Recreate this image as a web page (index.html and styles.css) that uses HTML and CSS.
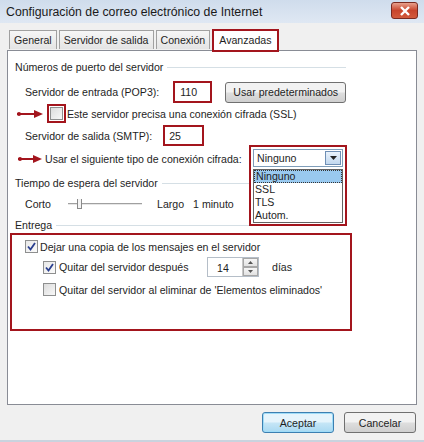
FILE: index.html
```html
<!DOCTYPE html>
<html lang="es">
<head>
  <meta charset="UTF-8">
  <title>Configuración de correo electrónico de Internet</title>
  <link rel="stylesheet" href="styles.css">
</head>
<body>
  <div class="window">
    <div class="titlebar">
      <span class="title">Configuración de correo electrónico de Internet</span>
      <div class="close">
        <svg width="12" height="10" viewBox="0 0 12 10"><path d="M2 1 L10 9 M10 1 L2 9" stroke="#fff" stroke-width="2.4"/></svg>
      </div>
    </div>

    <div class="tabs">
      <div class="tab">General</div>
      <div class="tab">Servidor de salida</div>
      <div class="tab">Conexión</div>
      <div class="tab active">Avanzadas</div>
    </div>

    <div class="panel">
      <div class="legend"><span>Números de puerto del servidor</span><i></i></div>

      <div class="row row-pop">
        <span class="lbl">Servidor de entrada (POP3):</span>
        <span class="mark mark-pop"><span class="field">110</span></span>
        <button class="btn btn-def">Usar predeterminados</button>
      </div>

      <div class="row row-ssl">
        <span class="arrow"></span>
        <span class="mark mark-chk"><span class="chk"></span></span>
        <span>Este servidor precisa una conexión cifrada (SSL)</span>
      </div>

      <div class="row row-smtp">
        <span class="lbl">Servidor de salida (SMTP):</span>
        <span class="mark mark-smtp"><span class="field">25</span></span>
      </div>

      <div class="row row-enc">
        <span class="arrow arrow-enc"></span>
        <span>Usar el siguiente tipo de conexión cifrada:</span>
        <div class="mark combo-wrap">
          <div class="combo">
            <span>Ninguno</span>
            <span class="combo-btn">
              <svg width="7" height="4" viewBox="0 0 7 4"><path d="M0 0 H7 L3.5 4 Z" fill="#222"/></svg>
            </span>
          </div>
          <div class="combo-list">
            <div class="opt sel">Ninguno</div>
            <div class="opt">SSL</div>
            <div class="opt">TLS</div>
            <div class="opt">Autom.</div>
          </div>
        </div>
      </div>

      <div class="legend legend-time"><span>Tiempo de espera del servidor</span><i></i></div>

      <div class="row row-slider">
        <span class="lbl-short">Corto</span>
        <span class="slider">
          <span class="track"></span>
          <span class="thumb"></span>
        </span>
        <span class="lbl-largo">Largo</span>
        <span>1 minuto</span>
      </div>

      <div class="legend legend-ent"><span>Entrega</span><i></i></div>

      <div class="mark entrega">
        <div class="row row-copy">
          <span class="chk on">
            <svg width="9" height="9" viewBox="0 0 9 9"><path d="M1 4.5 L3.5 7.5 L8 1" fill="none" stroke="#2a3f8f" stroke-width="1.8"/></svg>
          </span>
          <span>Dejar una copia de los mensajes en el servidor</span>
        </div>
        <div class="row row-sub">
          <span class="chk on">
            <svg width="9" height="9" viewBox="0 0 9 9"><path d="M1 4.5 L3.5 7.5 L8 1" fill="none" stroke="#2a3f8f" stroke-width="1.8"/></svg>
          </span>
          <span class="lbl-after">Quitar del servidor después</span>
          <span class="spin">
            <span class="spin-val">14</span>
            <span class="spin-btns">
              <span><svg width="5" height="3" viewBox="0 0 5 3"><path d="M0 3 H5 L2.5 0 Z" fill="#555"/></svg></span>
              <span><svg width="5" height="3" viewBox="0 0 5 3"><path d="M0 0 H5 L2.5 3 Z" fill="#555"/></svg></span>
            </span>
          </span>
          <span>días</span>
        </div>
        <div class="row row-sub">
          <span class="chk"></span>
          <span>Quitar del servidor al eliminar de 'Elementos eliminados'</span>
        </div>
      </div>
    </div>

    <div class="footer">
      <button class="btn btn-ok">Aceptar</button>
      <button class="btn btn-cancel">Cancelar</button>
    </div>
  </div>
</body>
</html>
```

FILE: styles.css
```css
* { box-sizing: border-box; margin: 0; padding: 0; }
body {
  font-family: 'Liberation Sans', Arial, sans-serif;
  font-size: 10.6px;
  color: #1e1e1e;
  background: #f0f0f0;
}
.window {
  width: 424px;
  height: 442px;
  background: #f0f0f0;
  border-bottom: 2px solid #c9d3de;
  display: flex;
  flex-direction: column;
}
.titlebar {
  height: 23px;
  background: linear-gradient(#cfdcec, #dfe8f3);
  display: flex;
  align-items: center;
  justify-content: space-between;
  padding: 0 6px 0 6px;
}
.title {
  font-size: 12.3px;
  color: #1a1a1a;
}
.close {
  width: 27px;
  height: 17px;
  margin-top: -2px;
  border: 1px solid #7a2a20;
  border-radius: 3px;
  background: linear-gradient(#e8a08c, #c8452c 50%, #d25a3c);
  display: flex;
  align-items: center;
  justify-content: center;
}
.tabs {
  display: flex;
  padding: 0 0 0 9px;
  height: 27px;
  align-items: flex-end;
  position: relative;
  z-index: 2;
}
.tab {
  height: 19px;
  padding: 0 4px;
  border: 1px solid #a0a0a0;
  border-bottom: none;
  background: linear-gradient(#f6f6f6, #e4e4e4);
  margin-right: 2px;
  display: flex;
  align-items: center;
  margin-bottom: 1px;
}
.tab.active {
  height: 23px;
  margin-bottom: -2px;
  background: #fff;
  border: 2px solid #a3151d;
  padding: 0 5px 2px;
}
.panel {
  margin: 0 7px;
  height: 355px;
  background: #fff;
  border: 1px solid #898c95;
  padding: 9px 0 0 7px;
  display: flex;
  flex-direction: column;
  position: relative;
}
.legend {
  width: 331px;
  height: 14px;
  display: flex;
  align-items: center;
  gap: 4px;
}
.legend i {
  flex: 1;
  height: 1px;
  background: #d5dfe5;
}
.row {
  display: flex;
  align-items: center;
}
.mark {
  border: 2px solid #a3151d;
}
.row-pop {
  height: 22px;
  margin-top: 7px;
  padding-left: 10px;
}
.mark-pop {
  margin-left: 14px;
  width: 39px;
  height: 22px;
  display: flex;
  align-items: center;
  padding-left: 5px;
}
.btn {
  font-family: inherit;
  font-size: 10.6px;
  color: #1e1e1e;
  border: 1px solid #707070;
  border-radius: 3px;
  background: linear-gradient(#f2f2f2 45%, #dddddd 55%, #cfcfcf);
  height: 21px;
}
.btn-def {
  margin-left: 13px;
  width: 121px;
}
.row-ssl {
  height: 19px;
  margin-top: 1px;
  padding-left: 2px;
}
.arrow {
  width: 26px;
  height: 6px;
  position: relative;
  margin-right: 4px;
  background: linear-gradient(#a3151d, #a3151d) left center / 18px 2px no-repeat;
}
.arrow::before {
  content: '';
  position: absolute;
  left: 0;
  top: 1px;
  width: 4px;
  height: 4px;
  border-radius: 50%;
  background: #a3151d;
}
.arrow::after {
  content: '';
  position: absolute;
  right: 0;
  top: -1px;
  border-left: 9px solid #a3151d;
  border-top: 4px solid transparent;
  border-bottom: 4px solid transparent;
}
.mark-chk {
  width: 19px;
  height: 19px;
  display: flex;
  align-items: center;
  justify-content: center;
  margin-right: 1px;
}
.chk {
  width: 13px;
  height: 13px;
  border: 1px solid #8e8f8f;
  background: linear-gradient(135deg, #dcdcdc, #f8f8f8);
  display: flex;
  align-items: center;
  justify-content: center;
  flex-shrink: 0;
}
.chk.on {
  background: linear-gradient(135deg, #e8e8e8, #fbfbfb);
}
.row-smtp {
  height: 21px;
  margin-top: 2px;
  padding-left: 10px;
}
.mark-smtp {
  margin-left: 11px;
  width: 41px;
  height: 21px;
  display: flex;
  align-items: center;
  padding-left: 4px;
}
.row-enc {
  height: 20px;
  margin-top: 3px;
  padding-left: 3px;
  position: relative;
  z-index: 3;
}
.arrow-enc {
  width: 24px;
  margin-right: 3px;
}
.combo-wrap {
  position: absolute;
  left: 234px;
  top: -4px;
  width: 98px;
  padding: 2px 2px 1px;
  background: #fff;
}
.combo {
  height: 18px;
  border: 1px solid #7f9db9;
  display: flex;
  align-items: center;
  justify-content: space-between;
  padding-left: 3px;
}
.combo-btn {
  width: 16px;
  height: 14px;
  margin-right: 1px;
  border: 1px solid #6f8fb5;
  background: linear-gradient(#e9f2fb, #c2d8ef);
  display: flex;
  align-items: center;
  justify-content: center;
}
.combo-list {
  margin-top: 2px;
  border: 1px solid #646464;
}
.opt {
  height: 13px;
  line-height: 13px;
  padding-left: 1px;
}
.opt.sel {
  background: #99c9ef;
  border: 1px dotted #333;
  line-height: 11px;
}
.legend-time {
  margin-top: 7px;
}
.row-slider {
  height: 16px;
  margin-top: 6px;
  padding-left: 10px;
}
.lbl-short {
  width: 40px;
}
.slider {
  position: relative;
  width: 74px;
  height: 12px;
  margin-left: 3px;
}
.track {
  position: absolute;
  left: 0;
  right: 0;
  top: 5px;
  height: 2px;
  border-top: 1px solid #a0a0a0;
  border-bottom: 1px solid #e6e6e6;
}
.thumb {
  position: absolute;
  left: 9px;
  top: 1px;
  width: 5px;
  height: 10px;
  border: 1px solid #8a8a8a;
  border-top: none;
  background: #f4f4f4;
}
.lbl-largo {
  margin-left: 15px;
  margin-right: 9px;
}
.legend-ent {
  margin-top: 6px;
}
.entrega {
  margin: 1px 0 0 -5px;
  width: 342px;
  height: 98px;
  padding: 5px 0 0 13px;
  display: flex;
  flex-direction: column;
}
.row-copy {
  gap: 2px;
}
.row-sub {
  padding-left: 18px;
  gap: 3px;
  margin-top: 4px;
}
.row-sub + .row-sub {
  margin-top: 6px;
}
.lbl-after {
  width: 145px;
}
.spin {
  width: 52px;
  height: 20px;
  border: 1px solid #b5bec8;
  display: flex;
  margin-right: 10px;
}
.spin-val {
  flex: 1;
  padding: 4px 0 0 9px;
}
.spin-btns {
  width: 16px;
  display: flex;
  flex-direction: column;
  border-left: 1px solid #c8c8c8;
}
.spin-btns span {
  flex: 1;
  display: flex;
  align-items: center;
  justify-content: center;
  background: linear-gradient(#f6f6f6, #e2e2e2);
  border: 1px solid #a7a7a7;
}
.footer {
  display: flex;
  justify-content: flex-end;
  gap: 10px;
  padding: 7px 8px 0 0;
}
.btn-ok {
  width: 72px;
  height: 21px;
  border-color: #3c7fb1;
  background: linear-gradient(#e5f4fc 45%, #c4e5f6 55%, #a9d9f2);
  box-shadow: inset 0 0 0 1px #9fdcf8;
}
.btn-cancel {
  width: 72px;
}
```
